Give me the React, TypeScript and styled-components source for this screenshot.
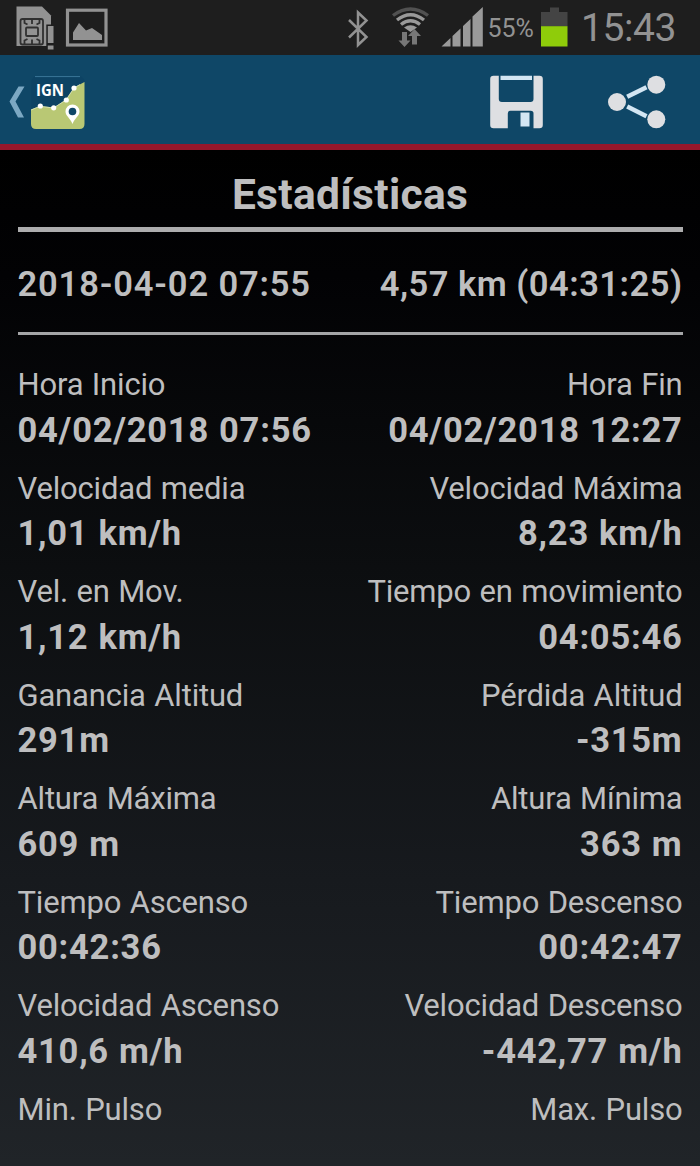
import React from "react";
import styled, { createGlobalStyle } from "styled-components";

const GlobalStyle = createGlobalStyle`
  *, *::before, *::after { box-sizing: border-box; }
  html, body { margin: 0; padding: 0; background: #000; }
  body { overflow: hidden; }
`;

const Screen = styled.div`
  width: 700px;
  height: 1166px;
  overflow: hidden;
  display: flex;
  flex-direction: column;
  font-family: Roboto, "Liberation Sans", sans-serif;
  color: #bebebf;
`;

const StatusBar = styled.header`
  flex: none;
  height: 55px;
  background: #1e1e1e;
  color: #929292;
  display: flex;
  justify-content: space-between;
`;

const StatusGroup = styled.div`
  display: flex;
  align-items: flex-start;
`;

const BatteryLevel = styled.span`
  width: 58px;
  padding: 14px 0 0 4.5px;
  font-size: 25px;
  line-height: 30px;
  letter-spacing: 0;
`;

const Clock = styled.time`
  width: 131px;
  padding: 4px 0 0 12px;
  font-size: 39px;
  line-height: 48px;
  letter-spacing: -0.4px;
`;

const ActionBar = styled.nav`
  flex: none;
  height: 95px;
  background: #0f4767;
  border-bottom: 6px solid #96172b;
  display: flex;
  justify-content: space-between;
`;

const BarButton = styled.button<{ $width: number }>`
  width: ${(p) => p.$width}px;
  height: 89px;
  padding: 0;
  border: 0;
  background: none;
  display: block;
`;

const Actions = styled.div`
  display: flex;
`;

const Content = styled.main`
  flex: 1;
  padding: 0 17.5px;
  background: linear-gradient(#000 0%, #020204 12%, #0c0e10 40%, #171a1e 70%, #212529 100%);
`;

const Title = styled.h1`
  margin: 0;
  height: 82px;
  padding-top: 19px;
  border-bottom: 5px solid #adadae;
  font-size: 42.5px;
  line-height: 52px;
  font-weight: 700;
  letter-spacing: 0.3px;
  text-align: center;
`;

const Summary = styled.div`
  height: 103px;
  padding-top: 29px;
  border-bottom: 3px solid #a4a5a7;
  display: flex;
  justify-content: space-between;
  font-size: 34.5px;
  line-height: 46px;
  font-weight: 600;
`;

const SummaryItem = styled.span<{ $spacing: number }>`
  letter-spacing: ${(p) => p.$spacing}px;
`;

const Stats = styled.dl`
  margin: 0;
  padding-top: 30px;
`;

const StatRow = styled.div`
  height: 103.5px;
  display: flex;
  justify-content: space-between;
`;

const Stat = styled.div<{ $align: "left" | "right" }>`
  text-align: ${(p) => p.$align};
`;

const Label = styled.dt`
  font-size: 31px;
  line-height: 40px;
  letter-spacing: -0.18px;
  word-spacing: 1px;
  white-space: nowrap;
`;

const Value = styled.dd`
  margin: 1.5px 0 0;
  font-size: 34.5px;
  line-height: 46px;
  font-weight: 700;
  letter-spacing: 0.75px;
  word-spacing: 0.8px;
  white-space: nowrap;
`;

const NotificationIcons = () => (
  <svg width="130" height="55" viewBox="0 0 130 55">
    <path d="M16.5 6.5H42l9 9V46H16.5Z" fill="#929292" />
    <g fill="none" stroke="#303030" strokeWidth="1.8">
      <rect x="20.5" y="19" width="22.5" height="25.5" rx="2" />
      <rect x="26" y="27.5" width="12" height="8.5" rx="1" />
      <path d="M24.500 19v4l3 1.500M32 19v5M39.500 19v4l-3 1.500M24.500 44.500v-4l3-1.500M32 44.500v-5M39.500 44.500v-4l-3-1.500" />
    </g>
    <path d="M46.300 24.500H55V50H46.300Z" fill="#1e1e1e" />
    <path d="M47.800 26h5.700v17h-5.700zM47.800 45.500h5.700v4h-5.700Z" fill="#929292" />
    <rect x="67.5" y="10.2" width="38.5" height="34.8" fill="none" stroke="#929292" strokeWidth="3.2" />
    <path d="M73 40V32.5L79 23l7 7.5 6-2.5 10 7v5Z" fill="#929292" />
  </svg>
);

const ConnectionIcons = () => (
  <svg width="153" height="55" viewBox="330 0 153 55">
    <path d="M349 20 366.5 37 358 45V12.5l8.5 8L349 37.5" fill="none" stroke="#929292" strokeWidth="2.5" />
    <g fill="none" strokeWidth="3.4">
      <path d="M393 15.5Q410.500 2.500 428 15.500" stroke="#515151" />
      <path d="M397 20Q410.500 9.500 424 20" stroke="#999" />
      <path d="M401 24.500Q410.500 17 420 24.500" stroke="#999" />
    </g>
    <path d="M404 27.500q6.500-4.500 13 0L410.500 32Z" fill="#999" />
    <path d="M402 32h5v8.500h3.500L404.500 47 398.500 40.500h3.500Z" fill="#777" />
    <path d="M414.500 29 421 36h-4v8.500h-5V36h-4Z" fill="#777" />
    <path d="M441.500 46.500 450.500 38v8.500ZM452.500 46.500V36l8-7.500v18ZM463 46.500V26l7.500-7v27.500ZM472.500 46.500V16.500L482.800 7v39.500Z" fill="#9a9a9a" />
  </svg>
);

const BatteryIcon = () => (
  <svg width="28" height="55" viewBox="0 0 28 55">
    <path d="M9 7.500h9V12h8.500v14.500H0V12H9Z" fill="#444" />
    <path d="M0 26.200h26.500V46.500H0Z" fill="#8fcc0a" />
  </svg>
);

const HomeIcon = () => (
  <svg width="100" height="89" viewBox="0 55 100 89">
    <path d="M18.500 86.500H24.500L15.500 101.500 24 117.500H18L9.500 101.500Z" fill="#7ca8c3" />
    <rect x="31.500" y="76.500" width="53" height="52" rx="5" fill="#0d4364" />
    <path d="M35 76.600h45" stroke="#3a7799" strokeWidth="1" />
    <path d="M31 109.500 40 106l14 1.500 12-8 8-12L84.500 82v42q0 5-5 5H36q-5 0-5-5Z" fill="#b9c874" />
    <path d="M31 110 40 106.300 53.500 108 66 100 74 88 80 84.500" fill="none" stroke="#dce4c0" strokeWidth="0.8" />
    <g fill="#fff">
      <circle cx="40.300" cy="106" r="2.600" />
      <circle cx="53.700" cy="107.800" r="2.600" />
      <circle cx="66.300" cy="100" r="2.600" />
      <circle cx="74" cy="88" r="2.600" />
      <path d="M72.500 124C70 117.500 65.500 116 65.500 111.500a7 7 0 0 1 14 0C79.500 116 75 117.500 72.500 124Z" />
    </g>
    <circle cx="72.500" cy="111.500" r="3.800" fill="#0f4767" />
    <text x="36" y="96.300" fill="#fff" fontFamily="Open Sans, sans-serif" fontWeight="700" fontSize="15.500" textLength="28" lengthAdjust="spacingAndGlyphs">IGN</text>
  </svg>
);

const SaveIcon = () => (
  <svg width="120" height="89" viewBox="460 55 120 89">
    <path d="M493.500 75.700H498.800V99q0 3 3 3H530.500q3 0 3-3V75.700H539.500q3.300 0 3.300 3.300V125q0 3.300-3.300 3.300H533.500V113.500q0-2.700-2.700-2.700H510.500q-2.700 0-2.700 2.700V128.300H493.500q-3.300 0-3.300-3.300V79q0-3.300 3.300-3.300Z" fill="#dedfe2" />
    <path d="M500.500 75.700h31.500V80h-31.500ZM520.500 112.500h9v14h-9Z" fill="#d3e6f3" />
  </svg>
);

const ShareIcon = () => (
  <svg width="120" height="89" viewBox="580 55 120 89">
    <path d="M627.200 96.800 646.500 87.200M627.200 106.500 646.500 116.300" stroke="#d3e6f3" strokeWidth="4.500" />
    <g fill="#dedfe2">
      <circle cx="617" cy="102" r="9" />
      <circle cx="656.300" cy="84.700" r="9" />
      <circle cx="656.300" cy="119.300" r="9" />
    </g>
  </svg>
);

type Entry = { label: string; value?: string };

const rows: [Entry, Entry][] = [
  [{ label: "Hora Inicio", value: "04/02/2018 07:56" }, { label: "Hora Fin", value: "04/02/2018 12:27" }],
  [{ label: "Velocidad media", value: "1,01 km/h" }, { label: "Velocidad Máxima", value: "8,23 km/h" }],
  [{ label: "Vel. en Mov.", value: "1,12 km/h" }, { label: "Tiempo en movimiento", value: "04:05:46" }],
  [{ label: "Ganancia Altitud", value: "291m" }, { label: "Pérdida Altitud", value: "-315m" }],
  [{ label: "Altura Máxima", value: "609 m" }, { label: "Altura Mínima", value: "363 m" }],
  [{ label: "Tiempo Ascenso", value: "00:42:36" }, { label: "Tiempo Descenso", value: "00:42:47" }],
  [{ label: "Velocidad Ascenso", value: "410,6 m/h" }, { label: "Velocidad Descenso", value: "-442,77 m/h" }],
  [{ label: "Min. Pulso" }, { label: "Max. Pulso" }],
];

export default function App() {
  return (
    <Screen>
      <GlobalStyle />
      <StatusBar>
        <NotificationIcons />
        <StatusGroup>
          <ConnectionIcons />
          <BatteryLevel>55%</BatteryLevel>
          <BatteryIcon />
          <Clock>15:43</Clock>
        </StatusGroup>
      </StatusBar>
      <ActionBar>
        <BarButton $width={100} aria-label="Volver"><HomeIcon /></BarButton>
        <Actions>
          <BarButton $width={120} aria-label="Guardar"><SaveIcon /></BarButton>
          <BarButton $width={120} aria-label="Compartir"><ShareIcon /></BarButton>
        </Actions>
      </ActionBar>
      <Content>
        <Title>Estadísticas</Title>
        <Summary>
          <SummaryItem $spacing={0.85}>2018-04-02 07:55</SummaryItem>
          <SummaryItem $spacing={0.5}>4,57 km (04:31:25)</SummaryItem>
        </Summary>
        <Stats>
          {rows.map((row) => (
            <StatRow key={row[0].label}>
              {row.map((entry, i) => (
                <Stat key={entry.label} $align={i === 0 ? "left" : "right"}>
                  <Label>{entry.label}</Label>
                  {entry.value && <Value>{entry.value}</Value>}
                </Stat>
              ))}
            </StatRow>
          ))}
        </Stats>
      </Content>
    </Screen>
  );
}
